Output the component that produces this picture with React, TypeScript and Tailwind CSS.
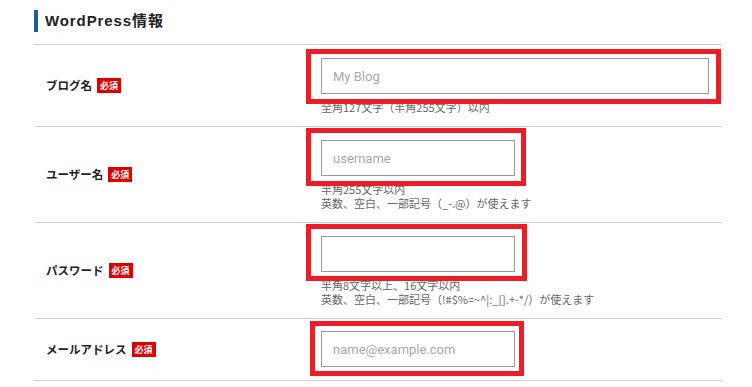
const jp = "font-['Noto_Sans_CJK_JP',sans-serif]"

type Field = {
  label: string
  placeholder: string
  wide?: boolean
  hints: string[]
  // red frame offsets around the input: [top, right, bottom, left]
  frame: string
  pad: string
}

const fields: Field[] = [
  {
    label: "ブログ名",
    placeholder: "My Blog",
    wide: true,
    hints: ["全角127文字（半角255文字）以内"],
    frame: "-top-[9px] -right-[12px] -bottom-[10px] -left-[15px]",
    pad: "pt-[13px] pb-[12px]",
  },
  {
    label: "ユーザー名",
    placeholder: "username",
    hints: ["半角255文字以内", "英数、空白、一部記号（_-.@）が使えます"],
    frame: "-top-[12px] -right-[11px] -bottom-[10px] -left-[15px]",
    pad: "pt-[13px] pb-[12px]",
  },
  {
    label: "パスワード",
    placeholder: "",
    hints: ["半角8文字以上、16文字以内", "英数、空白、一部記号（!#$%=~^|:_[].+-*/）が使えます"],
    frame: "-top-[12px] -right-[12px] -bottom-[9px] -left-[15px]",
    pad: "pt-[13px] pb-[12px]",
  },
  {
    label: "メールアドレス",
    placeholder: "name@example.com",
    hints: [],
    frame: "-top-[10px] -right-[9px] -bottom-[9px] -left-[11px]",
    pad: "pt-[12px] pb-[13px]",
  },
]

function Required() {
  return (
    <span className={`${jp} ml-[5px] inline-flex h-[15px] w-[24px] items-center justify-center bg-[#e00000] text-[9px] font-bold leading-none text-white`}>
      必須
    </span>
  )
}

export default function App() {
  return (
    <div className="w-[752px] h-[387px] bg-white pl-[34px] pr-[30px] pt-[10px] overflow-hidden">
      {/* Heading */}
      <div className="flex items-center border-l-4 border-[#1a5ca8] h-[22px] pl-[7px]">
        <h2 className="font-['Liberation_Sans','Noto_Sans_CJK_JP',sans-serif] text-[15px] font-bold tracking-[0.06em] text-[#222]">
          WordPress情報
        </h2>
      </div>

      <div className="mt-[12px] border-t border-[#d0d0d0]">
        {fields.map((f, i) => (
          <div key={i} className="flex border-b border-[#d0d0d0]">
            {/* Label */}
            <div className="w-[287px] pl-[12px] flex items-center">
              <span className={`${jp} text-[11.5px] font-bold text-[#222]`}>{f.label}</span>
              <Required />
            </div>

            {/* Input */}
            <div className={`${f.pad} flex-1`}>
              <div className={`relative ${f.wide ? "w-[388px]" : "w-[194px]"}`}>
                <input
                  className="block w-full h-[36px] border border-[#999] bg-white px-[11px] font-['Roboto',sans-serif] text-[13px] text-[#333] placeholder:text-[#a8a8a8] outline-none"
                  placeholder={f.placeholder}
                  readOnly
                />
                <span className={`pointer-events-none absolute ${f.frame} border-[5px] border-[#ee1c25]`} />
              </div>
              {f.hints.length > 0 && (
                <div className={`${jp} mt-[6px] text-[11px] leading-[14px] text-[#666]`}>
                  {f.hints.map((h, j) => (
                    <p key={j}>{h}</p>
                  ))}
                </div>
              )}
            </div>
          </div>
        ))}
      </div>
    </div>
  )
}
